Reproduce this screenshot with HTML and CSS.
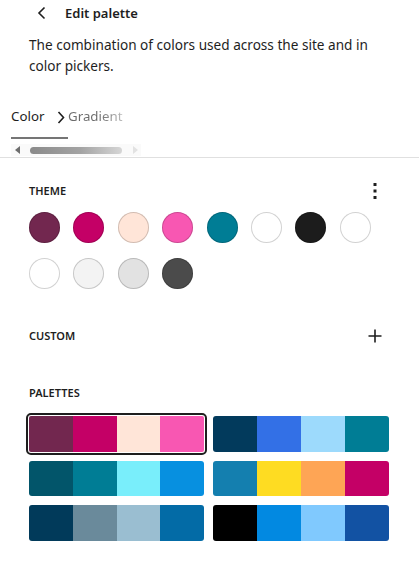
FILE: index.html
```html
<!DOCTYPE html>
<html lang="en">
<head>
<meta charset="utf-8">
<title>Edit palette</title>
<link rel="stylesheet" href="styles.css">
</head>
<body>
<div class="panel">
  <header class="top">
    <button class="back" aria-label="Back">
      <svg width="10" height="14" viewBox="0 0 10 14"><path d="M7.5 1.5 L2 7 L7.5 12.5" fill="none" stroke="#1e1e1e" stroke-width="1.6"/></svg>
    </button>
    <h2 class="title">Edit palette</h2>
  </header>
  <p class="desc">The combination of colors used across the site and in color pickers.</p>

  <div class="tabs-wrap">
    <div class="tabs">
      <span class="tab active">Color</span>
      <span class="tab grad">Gradient</span>
      <span class="tab-next"><svg width="8" height="13" viewBox="0 0 8 13"><path d="M1.5 1 L6.5 6.5 L1.5 12" fill="none" stroke="#1e1e1e" stroke-width="1.6"/></svg></span>
    </div>
    <div class="scrollbar">
      <span class="arrow left"></span>
      <span class="thumb"></span>
      <span class="arrow right"></span>
    </div>
  </div>

  <section class="section theme">
    <div class="section-head">
      <h3>Theme</h3>
      <button class="icon-btn" aria-label="Options">
        <svg width="4" height="18" viewBox="0 0 4 18"><rect x="0.5" y="1" width="3" height="3" fill="#1e1e1e"/><rect x="0.5" y="7.5" width="3" height="3" fill="#1e1e1e"/><rect x="0.5" y="14" width="3" height="3" fill="#1e1e1e"/></svg>
      </button>
    </div>
    <div class="swatches">
      <span class="swatch c1"></span>
      <span class="swatch c2"></span>
      <span class="swatch c3"></span>
      <span class="swatch c4"></span>
      <span class="swatch c5"></span>
      <span class="swatch c6"></span>
      <span class="swatch c7"></span>
      <span class="swatch c8"></span>
      <span class="swatch c9"></span>
      <span class="swatch c10"></span>
      <span class="swatch c11"></span>
      <span class="swatch c12"></span>
    </div>
  </section>

  <section class="section custom">
    <div class="section-head">
      <h3>Custom</h3>
      <button class="icon-btn" aria-label="Add color">
        <svg width="14" height="14" viewBox="0 0 14 14"><path d="M7 0.5 V13.5 M0.5 7 H13.5" stroke="#1e1e1e" stroke-width="1.6"/></svg>
      </button>
    </div>
  </section>

  <section class="section palettes">
    <div class="section-head"><h3>Palettes</h3></div>
    <div class="palette-grid">
      <div class="palette selected"><span class="p-wine"></span><span class="p-magenta"></span><span class="p-peach"></span><span class="p-pink"></span></div>
      <div class="palette"><span class="p-navy"></span><span class="p-blue"></span><span class="p-sky"></span><span class="p-teal"></span></div>
      <div class="palette"><span class="p-deepteal"></span><span class="p-teal"></span><span class="p-cyan"></span><span class="p-azure"></span></div>
      <div class="palette"><span class="p-ocean"></span><span class="p-yellow"></span><span class="p-orange"></span><span class="p-magenta"></span></div>
      <div class="palette"><span class="p-navy2"></span><span class="p-slate"></span><span class="p-haze"></span><span class="p-cobalt"></span></div>
      <div class="palette"><span class="p-black"></span><span class="p-bright"></span><span class="p-light"></span><span class="p-royal"></span></div>
    </div>
  </section>
</div>
</body>
</html>
```

FILE: styles.css
```css
* { box-sizing: border-box; }

html, body {
  margin: 0;
  background: #ffffff;
}

body {
  font-family: "Noto Sans", "Open Sans", sans-serif;
  font-size: 13px;
  color: #1e1e1e;
}

.panel {
  width: 419px;
}

.top {
  display: flex;
  align-items: center;
  height: 26px;
  padding-left: 35px;
}

.back {
  display: flex;
  align-items: center;
  justify-content: center;
  width: 14px;
  height: 24px;
  padding: 0;
  border: 0;
  background: none;
}

.title {
  margin: 0 0 0 16px;
  font-size: 13px;
  font-weight: 600;
  line-height: 20px;
}

.desc {
  margin: 8px 0 0;
  padding: 0 30px 0 29px;
  line-height: 21px;
  font-size: 13.6px;
}

.tabs-wrap {
  margin-top: 22px;
  padding-left: 11px;
  border-bottom: 1px solid #e0e0e0;
  padding-bottom: 1px;
}

.tabs {
  position: relative;
  display: flex;
  align-items: flex-end;
  height: 41px;
  width: 130px;
}

.tab {
  line-height: 20px;
  padding-bottom: 13px;
  font-size: 13.3px;
  white-space: nowrap;
}

.tab.active {
  width: 57px;
  border-bottom: 2px solid #757575;
  padding-bottom: 11px;
}

.tab.grad {
  background: linear-gradient(90deg, #6b6b6b 55%, #bdbdbd 100%);
  -webkit-background-clip: text;
  background-clip: text;
  color: transparent;
}

.tab-next {
  position: absolute;
  left: 46px;
  top: 13px;
  display: flex;
}

.scrollbar {
  display: flex;
  align-items: center;
  width: 130px;
  height: 12px;
  margin-top: 5px;
  background: #fafafa;
}

.arrow {
  width: 0;
  height: 0;
  border-top: 4px solid transparent;
  border-bottom: 4px solid transparent;
}

.arrow.left {
  margin-left: 4px;
  border-right: 5px solid #6e6e6e;
}

.arrow.right {
  margin-left: 11px;
  border-left: 5px solid #e2e2e2;
}

.thumb {
  width: 92px;
  height: 7px;
  margin-left: 10px;
  border-radius: 4px;
  background: linear-gradient(90deg, #8a8a8a 0%, #a3a3a3 55%, #d6d6d6 100%);
}

.section {
  padding: 0 30px 0 29px;
}

.section-head {
  display: flex;
  align-items: center;
  justify-content: space-between;
  height: 24px;
}

.section-head h3 {
  margin: 0;
  font-size: 11px;
  font-weight: 600;
  text-transform: uppercase;
  line-height: 16px;
}

.icon-btn {
  display: flex;
  align-items: center;
  justify-content: center;
  width: 24px;
  height: 24px;
  padding: 0;
  margin-right: 2px;
  border: 0;
  background: none;
}

.theme {
  margin-top: 21px;
}

.swatches {
  display: grid;
  grid-template-columns: repeat(8, 31px);
  column-gap: 13.4px;
  row-gap: 14.5px;
  margin-top: 9px;
}

.swatch {
  display: block;
  width: 31px;
  height: 31px;
  border-radius: 50%;
  box-shadow: inset 0 0 0 1px rgba(0, 0, 0, 0.18);
}

.c1 { background: #72274f; }
.c2 { background: #c40066; }
.c3 { background: #ffe5d8; }
.c4 { background: #f857b2; }
.c5 { background: #007d95; }
.c6 { background: #ffffff; }
.c7 { background: #1c1c1c; }
.c8 { background: #ffffff; }
.c9 { background: #ffffff; }
.c10 { background: #f3f3f3; }
.c11 { background: #e2e2e2; }
.c12 { background: #4b4b4b; }

.custom {
  margin-top: 35.5px;
}

.palettes {
  margin-top: 33px;
}

.palette-grid {
  display: grid;
  grid-template-columns: 175px 176px;
  column-gap: 9px;
  row-gap: 9px;
  margin-top: 11px;
}

.palette {
  display: flex;
  height: 35.5px;
  border-radius: 3px;
  overflow: hidden;
}

.palette.selected {
  outline: 2.5px solid #1e1e1e;
  outline-offset: 1px;
  border-radius: 2px;
}

.palette span {
  flex: 1;
}

.p-wine { background: #72274f; }
.p-magenta { background: #c40066; }
.p-peach { background: #ffe5d8; }
.p-pink { background: #f857b2; }
.p-navy { background: #023a5c; }
.p-blue { background: #3370e6; }
.p-sky { background: #9ddafc; }
.p-teal { background: #007d95; }
.p-deepteal { background: #02556a; }
.p-cyan { background: #79eefb; }
.p-azure { background: #0790e0; }
.p-ocean { background: #147faf; }
.p-yellow { background: #fedc22; }
.p-orange { background: #fea555; }
.p-navy2 { background: #013a5a; }
.p-slate { background: #6a8a9b; }
.p-haze { background: #9abed1; }
.p-cobalt { background: #036ba6; }
.p-black { background: #000000; }
.p-bright { background: #0289e1; }
.p-light { background: #80c9fe; }
.p-royal { background: #1252a3; }
```
